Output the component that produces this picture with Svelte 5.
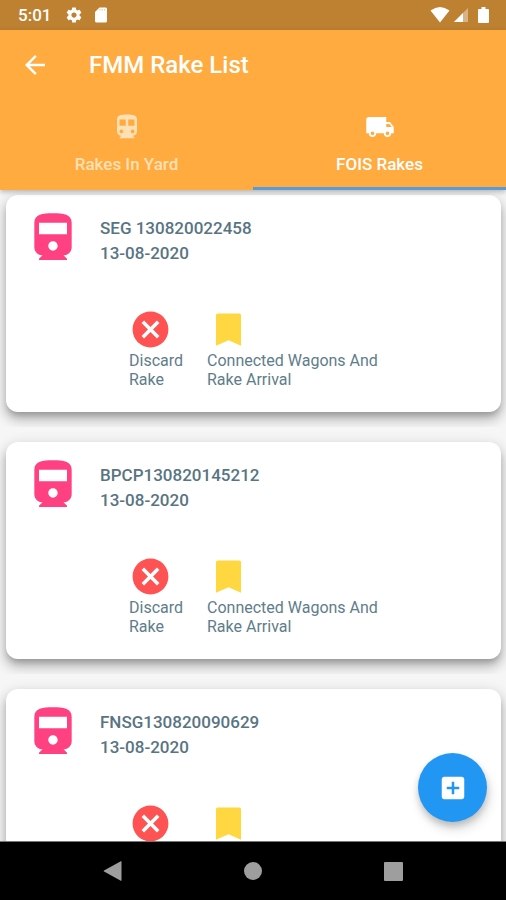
<script>
  let activeTab = "fois";

  const tabs = [
    {
      id: "yard",
      label: "Rakes In Yard",
      icon: "M12 2c-4.42 0-8 .5-8 4v9.5C4 17.43 5.57 19 7.5 19L6 20.5v.5h12v-.5L16.5 19c1.93 0 3.5-1.57 3.5-3.5V6c0-3.5-3.58-4-8-4zM7.5 17c-.83 0-1.5-.67-1.5-1.5S6.67 14 7.5 14s1.5.67 1.5 1.5S8.33 17 7.5 17zm3.5-6H6V6h5v5zm5.5 6c-.83 0-1.5-.67-1.5-1.5s.67-1.5 1.5-1.5 1.5.67 1.5 1.5-.67 1.5-1.5 1.5zm1.5-6h-5V6h5v5z",
    },
    {
      id: "fois",
      label: "FOIS Rakes",
      icon: "M20 8h-3V4H3c-1.1 0-2 .9-2 2v11h2c0 1.66 1.34 3 3 3s3-1.34 3-3h6c0 1.66 1.34 3 3 3s3-1.34 3-3h2v-5l-3-4zM6 18.5c-.83 0-1.5-.67-1.5-1.5s.67-1.5 1.5-1.5 1.5.67 1.5 1.5-.67 1.5-1.5 1.5zm13.5-9l1.96 2.5H17V9.5h2.5zm-1.5 9c-.83 0-1.5-.67-1.5-1.5s.67-1.5 1.5-1.5 1.5.67 1.5 1.5-.67 1.5-1.5 1.5z",
    },
  ];

  const rakes = [
    { name: "SEG 130820022458", date: "13-08-2020" },
    { name: "BPCP130820145212", date: "13-08-2020" },
    { name: "FNSG130820090629", date: "13-08-2020" },
  ];
</script>

<div class="screen">
  <div class="status">
    <span class="time">5:01</span>
    <svg width="18" height="18" viewBox="0 0 24 24">
      <path d="M19.43 12.98c.04-.32.07-.64.07-.98s-.03-.66-.07-.98l2.11-1.65c.19-.15.24-.42.12-.64l-2-3.46c-.12-.22-.39-.3-.61-.22l-2.49 1c-.52-.4-1.08-.73-1.69-.98l-.38-2.65C14.46 2.18 14.25 2 14 2h-4c-.25 0-.46.18-.49.42l-.38 2.65c-.61.25-1.17.59-1.69.98l-2.49-1c-.23-.09-.49 0-.61.22l-2 3.46c-.13.22-.07.49.12.64l2.11 1.65c-.04.32-.07.65-.07.98s.03.66.07.98l-2.11 1.65c-.19.15-.24.42-.12.64l2 3.46c.12.22.39.3.61.22l2.49-1c.52.4 1.08.73 1.69.98l.38 2.65c.03.24.24.42.49.42h4c.25 0 .46-.18.49-.42l.38-2.65c.61-.25 1.17-.59 1.69-.98l2.49 1c.23.09.49 0 .61-.22l2-3.46c.12-.22.07-.49-.12-.64l-2.11-1.65zM12 15.5c-1.93 0-3.5-1.57-3.5-3.5s1.57-3.5 3.5-3.5 3.5 1.57 3.5 3.5-1.57 3.5-3.5 3.5z" />
    </svg>
    <svg width="18" height="18" viewBox="0 0 24 24">
      <path d="M18 2h-8L4 8v12c0 1.1.9 2 2 2h12c1.1 0 2-.9 2-2V4c0-1.1-.9-2-2-2z" />
      <path class="pins" d="M10 4h1.5v2H10zM13 4h1.5v2H13zM16 4h1.500v2H16z" />
    </svg>
    <span class="signals">
      <svg width="20" height="16" viewBox="0 0 20 16">
        <path d="M10 15.5L.5 3.5Q10-3.5 19.5 3.5z" />
      </svg>
      <svg width="16" height="16" viewBox="0 0 16 16">
        <path opacity=".4" d="M15 1v14H1z" />
        <path d="M10 6v9H1z" />
      </svg>
      <svg width="11" height="16" viewBox="0 0 11 16">
        <path d="M3.5 0h4v2H10q1 0 1 1v12q0 1-1 1H1q-1 0-1-1V3q0-1 1-1h2.500z" />
      </svg>
    </span>
  </div>

  <header>
    <div class="toolbar">
      <button class="back" aria-label="Back">
        <svg width="30" height="30" viewBox="0 0 24 24">
          <path d="M20 11H7.83l5.59-5.59L12 4l-8 8 8 8 1.41-1.41L7.83 13H20v-2z" />
        </svg>
      </button>
      <h1>FMM Rake List</h1>
    </div>
    <div class="tabs" role="tablist">
      {#each tabs as tab}
        <button
          class="tab"
          class:active={activeTab === tab.id}
          role="tab"
          aria-selected={activeTab === tab.id}
          on:click={() => (activeTab = tab.id)}
        >
          <svg width="30" height="30" viewBox="0 0 24 24"><path d={tab.icon} /></svg>
          <span>{tab.label}</span>
        </button>
      {/each}
    </div>
  </header>

  <main>
    <ul>
      {#each rakes as rake}
        <li>
          <article>
            <div class="info">
              <svg class="train" width="56" height="56" viewBox="0 0 24 24">
                <path d="M4 15.5C4 17.43 5.57 19 7.5 19L6 20.5v.5h12v-.5L16.5 19c1.93 0 3.5-1.57 3.5-3.5V5c0-3.5-3.58-4-8-4s-8 .5-8 4v10.5zm8 1.500c-1.1 0-2-.9-2-2s.9-2 2-2 2 .9 2 2-.9 2-2 2zm6-7H6V5h12v5z" />
              </svg>
              <div>
                <h2>{rake.name}</h2>
                <p>{rake.date}</p>
              </div>
            </div>
            <div class="actions">
              <button class="discard">
                <svg width="43" height="43" viewBox="0 0 24 24">
                  <path d="M12 2C6.47 2 2 6.47 2 12s4.47 10 10 10 10-4.47 10-10S17.53 2 12 2zm5 13.59L15.59 17 12 13.41 8.41 17 7 15.59 10.59 12 7 8.41 8.41 7 12 10.59 15.59 7 17 8.41 13.41 12 17 15.59z" />
                </svg>
                <span>Discard Rake</span>
              </button>
              <button class="arrival">
                <svg width="43" height="43" viewBox="0 0 24 24">
                  <path d="M18 3H6q-1 0-1 1v17l7-3 7 3V4q0-1-1-1z" />
                </svg>
                <span>Connected Wagons And Rake Arrival</span>
              </button>
            </div>
          </article>
        </li>
      {/each}
    </ul>
    <button class="fab" aria-label="Add rake">
      <svg width="30" height="30" viewBox="0 0 24 24">
        <path d="M19 3H5c-1.11 0-2 .9-2 2v14c0 1.1.89 2 2 2h14c1.1 0 2-.9 2-2V5c0-1.1-.9-2-2-2zm-2 10h-4v4h-2v-4H7v-2h4V7h2v4h4v2z" />
      </svg>
    </button>
  </main>

  <nav>
    <button aria-label="Back">
      <svg width="20" height="20" viewBox="0 0 20 20">
        <path d="M18.5.5v19q0 .5-.7.2L1 10.5q-.7-.5 0-1L17.8.3q.7-.3.7.2z" />
      </svg>
    </button>
    <button aria-label="Home">
      <svg width="20" height="20" viewBox="0 0 20 20"><circle cx="10" cy="10" r="9" /></svg>
    </button>
    <button aria-label="Recent apps">
      <svg width="20" height="20" viewBox="0 0 20 20">
        <rect x="1" y="1" width="19" height="19" rx="1" />
      </svg>
    </button>
  </nav>
</div>

<style>
  :global(body) {
    margin: 0;
  }

  .screen {
    display: flex;
    flex-direction: column;
    height: 100vh;
    font-family: Roboto, "Liberation Sans", sans-serif;
    background: #f6f6f6;
  }

  svg {
    display: block;
    flex-shrink: 0;
    fill: currentColor;
  }

  button {
    padding: 0;
    border: 0;
    background: none;
    color: inherit;
    font: inherit;
    cursor: pointer;
  }

  h1,
  h2,
  p,
  ul {
    margin: 0;
    padding: 0;
  }

  .status {
    display: flex;
    align-items: center;
    gap: 9px;
    height: 30px;
    padding: 0 17px 0 18px;
    background: #be8132;
    color: #fff;
  }

  .time {
    margin-right: 5px;
    font-size: 17px;
    font-weight: 500;
    line-height: 32px;
  }

  .pins {
    fill: #e5cba8;
  }

  .signals {
    display: flex;
    gap: 3px;
    margin-left: auto;
  }

  .signals svg:last-child {
    margin-left: 6px;
  }

  header {
    position: relative;
    z-index: 1;
    background: #ffab40;
    color: #fff;
    box-shadow: 0 2px 5px rgba(0, 0, 0, 0.25);
  }

  .toolbar {
    display: flex;
    align-items: center;
    gap: 39px;
    height: 70px;
    padding: 0 20px;
  }

  h1 {
    font-size: 24px;
    font-weight: 500;
  }

  .tabs {
    display: grid;
    grid-template-columns: 1fr 1fr;
  }

  .tab {
    display: flex;
    flex-direction: column;
    align-items: center;
    gap: 12px;
    height: 90px;
    padding-top: 12px;
    box-sizing: border-box;
    border-bottom: 3px solid transparent;
    color: #ffe0b5;
    font-size: 17px;
    font-weight: 500;
    line-height: 20px;
  }

  .tab.active {
    border-color: #5b9bd5;
    color: #fff;
  }

  main {
    position: relative;
    flex: 1;
    min-height: 0;
  }

  ul {
    height: 100%;
    overflow-y: auto;
    scrollbar-width: none;
    list-style: none;
  }

  li {
    padding: 15px 5px 15px 6px;
    overflow: hidden;
    background: #f6f6f6;
  }

  li:first-child {
    padding-top: 5px;
  }

  article {
    display: flex;
    flex-direction: column;
    gap: 41px;
    padding: 16px 19px 23px;
    border-radius: 12px;
    background: #fff;
    box-shadow:
      0 5px 6px -2px rgba(0, 0, 0, 0.22),
      0 8px 12px 1px rgba(0, 0, 0, 0.14),
      0 4px 14px 2px rgba(0, 0, 0, 0.12);
    color: #607d8b;
  }

  .info {
    display: flex;
    gap: 19px;
  }

  .train {
    color: #ff4081;
  }

  h2,
  p {
    color: #587482;
    font-size: 17px;
    font-weight: 500;
    line-height: 25px;
  }

  .info div {
    padding-top: 5px;
  }

  .actions {
    display: flex;
    gap: 24px;
    padding-left: 104px;
  }

  .actions button {
    text-align: left;
    font-size: 16px;
    line-height: 19px;
  }

  .actions span {
    display: block;
  }

  .discard {
    width: 54px;
  }

  .arrival {
    width: 180px;
  }

  .discard svg {
    color: #ff5252;
  }

  .arrival svg {
    color: #ffd740;
  }

  .fab {
    position: absolute;
    right: 19px;
    bottom: 19px;
    display: grid;
    place-items: center;
    width: 69px;
    height: 69px;
    border-radius: 50%;
    background: #2196f3;
    color: #fff;
    box-shadow:
      0 4px 6px rgba(0, 0, 0, 0.16),
      2px 7px 12px rgba(0, 0, 0, 0.14);
  }

  nav {
    display: grid;
    grid-template-columns: repeat(3, 1fr);
    height: 59px;
    padding: 0 43px;
    border-top: 1px solid #777;
    box-sizing: border-box;
    background: #000;
    color: #9e9e9e;
  }

  nav button {
    display: grid;
    place-items: center;
  }
</style>
